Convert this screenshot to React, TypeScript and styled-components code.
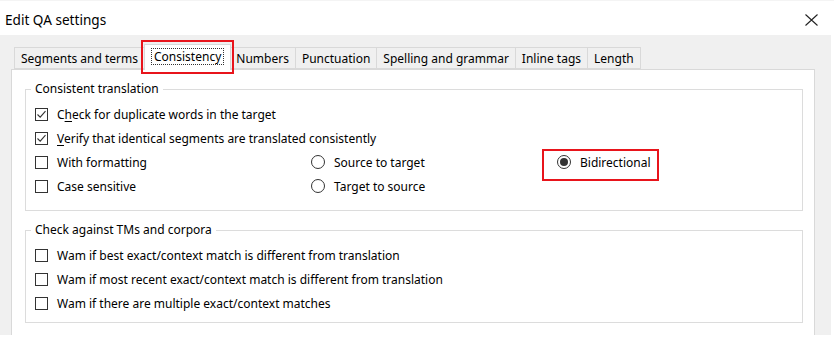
import React from 'react';
import styled, { createGlobalStyle } from 'styled-components';

const GlobalStyle = createGlobalStyle`
  html, body {
    margin: 0;
    padding: 0;
    background: #ffffff;
  }
  body {
    font-family: "Noto Sans", "Liberation Sans", Arial, sans-serif;
    font-size: 12px;
    color: #000000;
  }
`;

interface OptionProps {
  label: React.ReactNode;
  checked?: boolean;
}

const tabs = [
  'Segments and terms',
  'Consistency',
  'Numbers',
  'Punctuation',
  'Spelling and grammar',
  'Inline tags',
  'Length',
];

const CheckOption: React.FC<OptionProps> = ({ label, checked }) => (
  <OptionRow>
    <CheckBox>
      {checked && (
        <svg width="11" height="11" viewBox="0 0 11 11">
          <path d="M1.5 5.5 L4.2 8.2 L9.5 2.2" fill="none" stroke="#333" strokeWidth="1.1" />
        </svg>
      )}
    </CheckBox>
    <OptionLabel>{label}</OptionLabel>
  </OptionRow>
);

const RadioOption: React.FC<OptionProps & { $marked?: boolean }> = ({ label, checked, $marked }) => (
  <OptionRow $marked={$marked}>
    <RadioCircle>{checked && <RadioDot />}</RadioCircle>
    <OptionLabel>{label}</OptionLabel>
  </OptionRow>
);

const App: React.FC = () => {
  return (
    <Window>
      <GlobalStyle />
      <TitleBar>
        <Title>Edit QA settings</Title>
        <CloseIcon width="13" height="12" viewBox="0 0 13 12">
          <path d="M0.5 0.5 L12.5 11.5 M12.5 0.5 L0.5 11.5" stroke="#222" strokeWidth="1.1" fill="none" />
        </CloseIcon>
      </TitleBar>
      <DialogBody>
        <TabStrip>
          {tabs.map((t) => (
            <Tab key={t} $active={t === 'Consistency'}>
              {t === 'Consistency' ? <FocusText>{t}</FocusText> : t}
            </Tab>
          ))}
        </TabStrip>
        <TabPage>
          <GroupBox $bottom={24}>
            <Legend>Consistent translation</Legend>
            <CheckOption checked label={<>C<u>h</u>eck for duplicate words in the target</>} />
            <CheckOption checked label={<><u>V</u>erify that identical segments are translated consistently</>} />
            <OptionGrid>
              <CheckOption label="With formatting" />
              <RadioOption label="Source to target" />
              <RadioOption label="Bidirectional" checked $marked />
              <CheckOption label="Case sensitive" />
              <RadioOption label="Target to source" />
            </OptionGrid>
          </GroupBox>
          <GroupBox $bottom={19}>
            <Legend>Check against TMs and corpora</Legend>
            <CheckOption label="Wam if best exact/context match is different from translation" />
            <CheckOption label="Wam if most recent exact/context match is different from translation" />
            <CheckOption label="Wam if there are multiple exact/context matches" />
          </GroupBox>
        </TabPage>
      </DialogBody>
    </Window>
  );
};

const Window = styled.div`
  width: 834px;
  height: 344px;
  background: #ffffff;
  overflow: hidden;
`;

const TitleBar = styled.div`
  height: 35px;
  display: flex;
  align-items: center;
  justify-content: space-between;
  padding: 0 16px 0 5px;
  border-top: 1px solid #f4f4f4;
  box-sizing: border-box;
`;

const Title = styled.div`
  font-size: 13.6px;
  color: #000;
  margin-top: 3px;
`;

const CloseIcon = styled.svg`
  margin-top: 3px;
`;

const DialogBody = styled.div`
  width: 831px;
  height: 300px;
  background: #f0f0f0;
  padding: 12px 16px 0 11px;
  box-sizing: border-box;
  display: flex;
  flex-direction: column;
`;

const TabStrip = styled.div`
  display: flex;
  align-items: flex-end;
  height: 22px;
  padding-left: 3px;
  position: relative;
  z-index: 1;
`;

const Tab = styled.div<{ $active?: boolean }>`
  height: ${(p) => (p.$active ? '26px' : '22px')};
  box-sizing: border-box;
  display: flex;
  align-items: center;
  padding: 0 ${(p) => (p.$active ? '6px' : '6px')};
  margin: 0 ${(p) => (p.$active ? '-1px' : '0')};
  margin-bottom: ${(p) => (p.$active ? '-1px' : '0')};
  background: ${(p) => (p.$active ? '#ffffff' : '#f0f0f0')};
  border: 1px solid #d9d9d9;
  border-bottom: ${(p) => (p.$active ? 'none' : '1px solid #d9d9d9')};
  border-left: ${(p) => (p.$active ? '1px solid #d9d9d9' : 'none')};
  white-space: nowrap;
  position: relative;
  z-index: ${(p) => (p.$active ? 2 : 1)};
  &:first-child {
    border-left: 1px solid #d9d9d9;
  }
  ${(p) =>
    p.$active &&
    `
    &::after {
      content: '';
      position: absolute;
      left: -4px;
      right: -4px;
      top: -5px;
      bottom: -4px;
      border: 2px solid #e8141b;
    }
  `}
`;

const FocusText = styled.span`
  border: 1px dotted #333;
  padding: 0 2px;
  line-height: 15px;
  margin-top: -3px;
`;

const TabPage = styled.div`
  flex: 1;
  background: #ffffff;
  border: 1px solid #d9d9d9;
  border-bottom: none;
  padding: 19px 11px 0 13px;
  display: flex;
  flex-direction: column;
  gap: 19px;
`;

const GroupBox = styled.div<{ $bottom: number }>`
  position: relative;
  border: 1px solid #dcdcdc;
  padding: 12px 0 ${(p) => p.$bottom - 12}px 9px;
  display: flex;
  flex-direction: column;
`;

const Legend = styled.div`
  position: absolute;
  top: -9px;
  left: 5px;
  padding: 0 4px;
  background: #ffffff;
  line-height: 16px;
`;

const OptionRow = styled.div<{ $marked?: boolean }>`
  display: flex;
  align-items: center;
  height: 24px;
  position: relative;
  ${(p) =>
    p.$marked &&
    `
    &::after {
      content: '';
      position: absolute;
      left: -15px;
      top: -1px;
      width: 113px;
      height: 28px;
      border: 2px solid #e8141b;
    }
  `}
`;

const CheckBox = styled.span`
  width: 13px;
  height: 13px;
  border: 1px solid #333;
  box-sizing: border-box;
  display: flex;
  align-items: center;
  justify-content: center;
  margin-right: 9px;
  flex-shrink: 0;
`;

const RadioCircle = styled.span`
  width: 14px;
  height: 14px;
  border: 1px solid #333;
  border-radius: 50%;
  box-sizing: border-box;
  display: flex;
  align-items: center;
  justify-content: center;
  margin-right: 9px;
  flex-shrink: 0;
`;

const RadioDot = styled.span`
  width: 8px;
  height: 8px;
  border-radius: 50%;
  background: #333;
`;

const OptionLabel = styled.span`
  white-space: nowrap;
  u {
    text-decoration-thickness: 1px;
    text-underline-offset: 2px;
  }
`;

const OptionGrid = styled.div`
  display: grid;
  grid-template-columns: 276px 246px 1fr;
`;

export default App;
